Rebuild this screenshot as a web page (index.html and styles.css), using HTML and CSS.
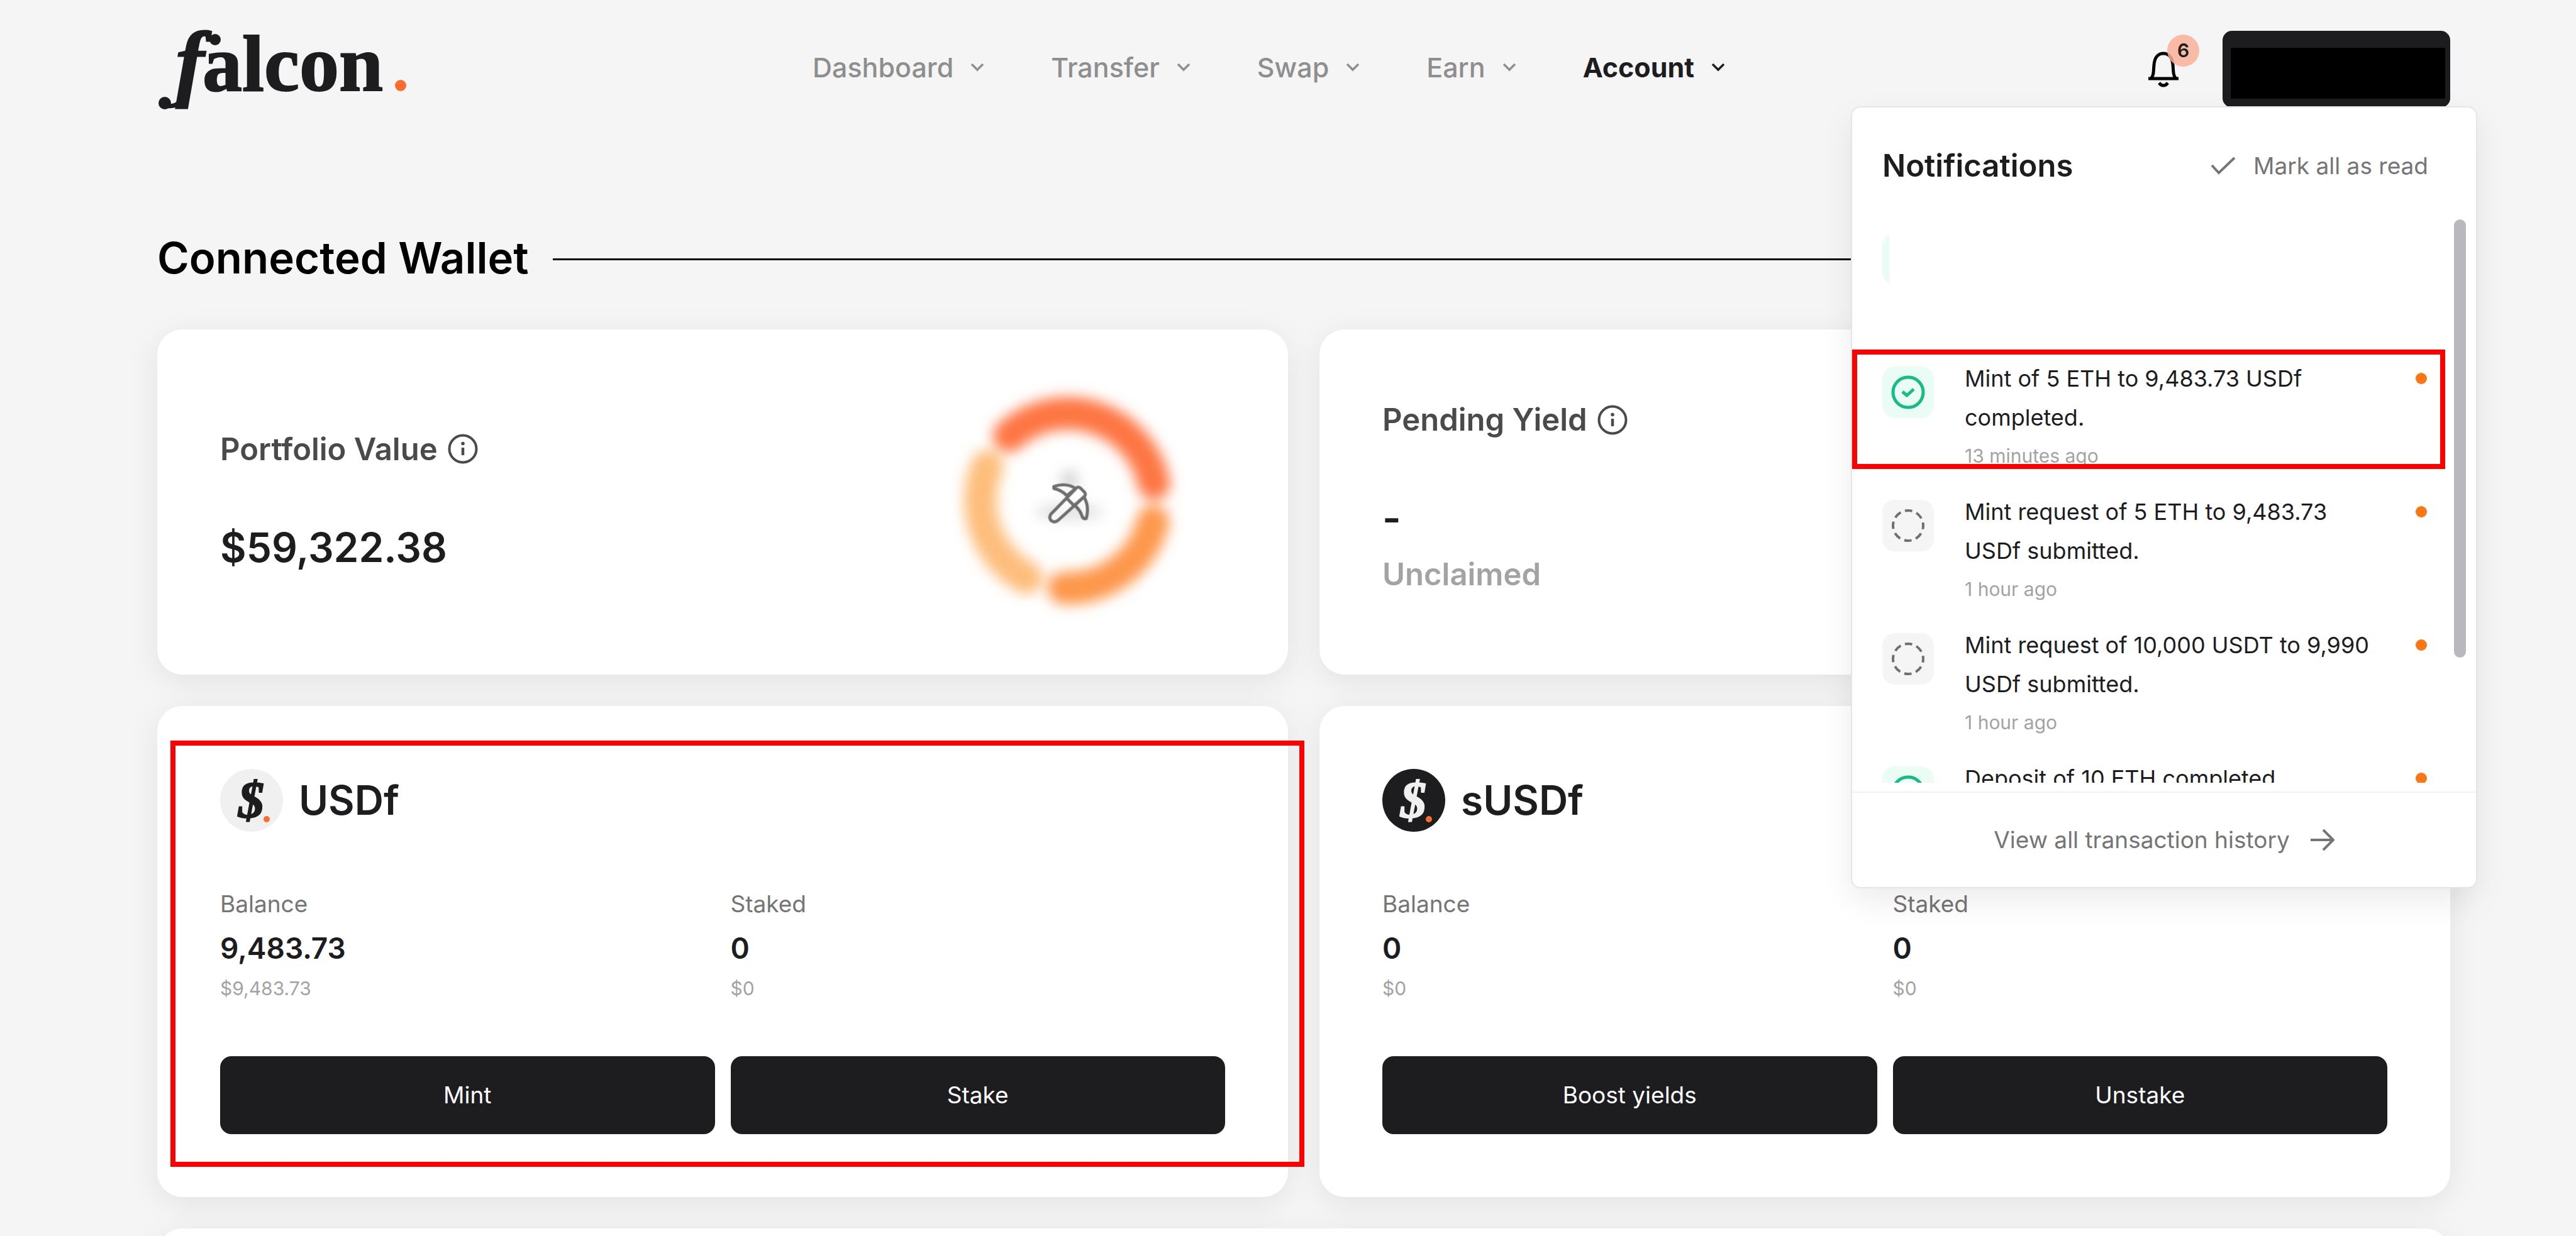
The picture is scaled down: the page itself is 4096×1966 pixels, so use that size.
FILE: index.html
```html
<!DOCTYPE html>
<html lang="en">
<head>
<meta charset="utf-8">
<title>Falcon</title>
<link rel="stylesheet" href="styles.css">
</head>
<body>
<svg class="sprite" aria-hidden="true">
  <symbol id="chevron" viewBox="0 0 24 24"><path d="M3 7l9 9 9-9" fill="none" stroke="currentColor" stroke-width="3.500"/></symbol>
  <symbol id="info" viewBox="0 0 48 48"><circle cx="24" cy="24" r="21.5" fill="none" stroke="currentColor" stroke-width="4"/><path d="M24 22v12" stroke="currentColor" stroke-width="4.5"/><circle cx="24" cy="15.500" r="2.800" fill="currentColor"/></symbol>
  <symbol id="done" viewBox="0 0 54 54"><circle cx="27" cy="27" r="24" fill="none" stroke="currentColor" stroke-width="5"/><path d="M18 26l7 6 11-10" fill="none" stroke="currentColor" stroke-width="5"/></symbol>
  <symbol id="pending" viewBox="0 0 54 54"><circle cx="27" cy="27" r="24" fill="none" stroke="currentColor" stroke-width="4" stroke-dasharray="11.850 7" stroke-dashoffset="5.900"/></symbol>
</svg>
<div class="page">
  <header class="header">
    <a class="logo" href="#" aria-label="falcon">
      <svg width="398" height="130" viewBox="0 0 398 130">
        <text class="logo-f" x="30" y="95">f</text>
        <path d="M47 96Q36 124 13 119" fill="none" stroke="#1d1d1f" stroke-width="7"/>
        <circle cx="12" cy="115" r="10" fill="#1d1d1f"/>
        <circle cx="92" cy="14" r="9" fill="#1d1d1f"/>
        <text class="logo-rest" x="72" y="95">alcon</text>
        <circle cx="387" cy="87" r="9" fill="#fd6c2d"/>
      </svg>
    </a>
    <nav class="nav">
      <a href="#">Dashboard<svg><use href="#chevron"/></svg></a>
      <a href="#">Transfer<svg><use href="#chevron"/></svg></a>
      <a href="#">Swap<svg><use href="#chevron"/></svg></a>
      <a href="#">Earn<svg><use href="#chevron"/></svg></a>
      <a href="#" class="active">Account<svg><use href="#chevron"/></svg></a>
    </nav>
    <div class="actions">
      <button class="bell" aria-label="Notifications">
        <svg width="60" height="60" viewBox="0 0 60 60"><path d="M6 45h48M10 45c5-5 4-12 5-22C16 11 22 5 30 5s14 6 15 18c1 10 0 17 5 22" fill="none" stroke="#000" stroke-width="5"/><path d="M23 52q7 8 14 0" fill="none" stroke="#000" stroke-width="5"/></svg>
        <span class="badge">6</span>
      </button>
      <button class="wallet" aria-label="Wallet"><span></span></button>
    </div>
    <section class="panel">
      <div class="panel-head">
        <h2>Notifications</h2>
        <button class="mark"><svg width="40" height="30" viewBox="0 0 40 30"><path d="M2 14l11 12L38 2" fill="none" stroke="currentColor" stroke-width="4"/></svg>Mark all as read</button>
      </div>
      <div class="panel-body">
        <ul class="list">
          <li class="redacted"><span class="sliver"><span class="state ok"></span></span></li>
          <li class="marked"><span class="state ok"><svg><use href="#done"/></svg></span><div><p>Mint of 5 ETH to 9,483.73 USDf completed.</p><time>13 minutes ago</time></div><i class="dot"></i></li>
          <li><span class="state"><svg><use href="#pending"/></svg></span><div><p>Mint request of 5 ETH to 9,483.73 USDf submitted.</p><time>1 hour ago</time></div><i class="dot"></i></li>
          <li><span class="state"><svg><use href="#pending"/></svg></span><div><p>Mint request of 10,000 USDT to 9,990 USDf submitted.</p><time>1 hour ago</time></div><i class="dot"></i></li>
          <li><span class="state ok"><svg><use href="#done"/></svg></span><div><p>Deposit of 10 ETH completed.</p></div><i class="dot"></i></li>
        </ul>
        <div class="thumb"></div>
      </div>
      <a class="panel-foot" href="#">View all transaction history<svg width="38" height="36" viewBox="0 0 38 36"><path d="M0 18h36M20 2l16 16-16 16" fill="none" stroke="currentColor" stroke-width="4"/></svg></a>
    </section>
  </header>
  <main>
    <h1 class="title">Connected Wallet</h1>
    <div class="cards">
      <section class="card summary">
        <div>
          <h3>Portfolio Value <svg><use href="#info"/></svg></h3>
          <p class="amount">$59,322.38</p>
        </div>
        <svg class="donut" width="440" height="440" viewBox="-671 -671 1342 1342">
          <defs><filter id="soft" x="-30%" y="-30%" width="160%" height="160%"><feGaussianBlur stdDeviation="33"/></filter></defs>
          <g filter="url(#soft)" fill="none" stroke-width="158" stroke-linecap="round">
            <path d="M-285-313A425 425 0 0 1 417-82" stroke="#fd7643"/>
            <path d="M413 102A425 425 0 0 1-20 425" stroke="#fd974c"/>
            <path d="M-201 375A425 425 0 0 1-391-165" stroke="#fdbe7c"/>
          </g>
          <g filter="url(#soft)" fill="#000"><circle cx="8" cy="-100" r="42" opacity=".2"/><ellipse cx="5" cy="55" rx="165" ry="38" opacity=".12"/></g>
          <g transform="translate(-683 -638)" fill="#fff" fill-opacity=".6" stroke="#6e6e6e" stroke-width="15" stroke-linejoin="round">
            <path d="M615 570q60-20 105 10l-42 35q-25-27-63-35z"/>
            <path d="M760 620q28 45 12 105q-14 5-20-10q-10-32-38-55z"/>
            <path d="M600 705L722 580q8-12 22-2l20 20q8 12-2 22L636 734q-20 16-36 0q-10-14 0-29z"/>
            <path d="M678 628l32 32" fill="none"/>
          </g>
        </svg>
      </section>
      <section class="card summary">
        <div>
          <h3>Pending Yield <svg><use href="#info"/></svg></h3>
          <p class="amount">-</p>
          <p class="note">Unclaimed</p>
        </div>
      </section>
      <section class="card token outlined">
        <h2><svg width="100" height="100" viewBox="0 0 100 100"><circle cx="50" cy="50" r="50" fill="#f0f0f0"/><text class="coin" x="29" y="77" fill="#1d1d1f" stroke="#1d1d1f">$</text><circle cx="74" cy="80" r="5" fill="#fd6c2d"/></svg>USDf</h2>
        <dl>
          <div><dt>Balance</dt><dd>9,483.73</dd><dd class="sub">$9,483.73</dd></div>
          <div><dt>Staked</dt><dd>0</dd><dd class="sub">$0</dd></div>
        </dl>
        <div class="buttons"><button>Mint</button><button>Stake</button></div>
      </section>
      <section class="card token">
        <h2><svg width="100" height="100" viewBox="0 0 100 100"><circle cx="50" cy="50" r="50" fill="#1d1d1f"/><text class="coin" x="29" y="77" fill="#f0f0f0" stroke="#f0f0f0">$</text><circle cx="74" cy="80" r="5" fill="#fd6c2d"/></svg>sUSDf</h2>
        <dl>
          <div><dt>Balance</dt><dd>0</dd><dd class="sub">$0</dd></div>
          <div><dt>Staked</dt><dd>0</dd><dd class="sub">$0</dd></div>
        </dl>
        <div class="buttons"><button>Boost yields</button><button>Unstake</button></div>
      </section>
      <section class="card wide"></section>
    </div>
  </main>
</div>
</body>
</html>
```
FILE: styles.css
```css
*, *::after { box-sizing: border-box; margin: 0; padding: 0; }
body {
  height: 100vh;
  overflow: hidden;
  background: #f5f5f5;
  color: #1d1d1f;
  font: 400 40px/60px Inter, "Open Sans", sans-serif;
}
button { border: 0; background: none; font: inherit; color: inherit; }
a { color: inherit; text-decoration: none; }
svg { flex: none; display: block; }
.sprite { position: absolute; width: 0; height: 0; }
.page { padding: 0 200px 0 250px; }

.header { position: relative; display: flex; align-items: flex-start; justify-content: space-between; height: 360px; padding-top: 49px; }
.logo { display: block; height: 130px; }
.logo svg { overflow: visible; }
.logo text { font-family: "Liberation Serif", serif; font-weight: 700; fill: #1d1d1f; stroke: #1d1d1f; stroke-width: 2px; }
.logo .logo-f { font-size: 134px; font-style: italic; stroke-width: 3px; }
.logo .logo-rest { font-size: 126px; }
.nav { display: flex; gap: 105px; height: 116px; align-items: center; margin-right: 22px; font-size: 43px; font-weight: 500; color: #8e8e8e; }
.nav a { display: flex; align-items: center; gap: 26px; }
.nav svg { width: 24px; height: 24px; }
.nav .active { color: #1d1d1f; font-weight: 700; }
.actions { display: flex; align-items: center; gap: 64px; }
.bell { position: relative; width: 60px; height: 60px; }
.badge { position: absolute; left: 36px; top: -25px; width: 51px; height: 51px; border-radius: 50%; background: rgba(249, 176, 150, .85); font-size: 30px; line-height: 51px; font-weight: 600; text-align: center; }
.wallet { width: 362px; height: 122px; border-radius: 15px; background: #1d1d1f; padding: 27px 8px 14px 13px; }
.wallet span { display: block; height: 81px; background: #000; }

.panel { position: absolute; z-index: 2; top: 169px; right: -43px; width: 996px; background: #fff; border: 2px solid #e5e5e5; border-radius: 15px; box-shadow: 0 20px 50px rgba(0, 0, 0, .08); }
.panel-head { display: flex; align-items: center; justify-content: space-between; height: 178px; padding: 8px 76px 0 48px; }
.panel-head h2 { font-size: 49px; font-weight: 600; }
.mark { display: flex; align-items: center; gap: 28px; font-size: 37px; color: #757575; }
.panel-body { display: flex; gap: 43px; height: 912px; padding: 0 16px 14px 48px; border-bottom: 2px solid #f2f2f2; }
.list { flex: 1; list-style: none; overflow: hidden; margin: 0 -29px 0 -48px; padding: 10px 29px 0 48px; }
.list li { position: relative; display: flex; height: 212px; font-size: 36px; line-height: 62px; }
.list div { flex: 1; margin: 0 56px 0 49px; }
.list time { display: block; margin-top: 10px; font-size: 30px; line-height: 40px; color: #a3a3a3; }
.state { display: flex; align-items: center; justify-content: center; flex: none; width: 82px; height: 82px; margin-top: 12px; border-radius: 20px; background: #f5f5f5; color: #707070; }
.state svg { width: 54px; height: 54px; }
.state.ok { background: #eafdf5; color: #16bb85; }
.sliver { width: 11px; overflow: hidden; }
.dot { flex: none; width: 18px; height: 18px; margin-top: 22px; border-radius: 50%; background: #fc7614; }
.marked::after { content: ""; position: absolute; left: -48px; top: -15px; right: -29px; height: 190px; border: 8px solid #f00; }
.thumb { flex: none; width: 19px; height: 697px; border-radius: 10px; background: #b9b8be; }
.panel-foot { display: flex; align-items: center; justify-content: center; gap: 33px; height: 150px; font-size: 37px; color: #757575; }

.title { display: flex; align-items: center; gap: 38px; height: 100px; font-size: 69px; font-weight: 600; color: #000; white-space: nowrap; }
.title::after { content: ""; flex: 1; height: 3px; margin-top: 4px; background: #000; }
.cards { display: grid; grid-template-columns: 1fr 1fr; gap: 50px; margin-top: 64px; }
.card { position: relative; background: #fff; border-radius: 40px; padding: 100px; box-shadow: 0 10px 50px rgba(0, 0, 0, .08); }
.summary { display: flex; align-items: center; justify-content: space-between; height: 549px; padding-right: 130px; padding-bottom: 106px; }
.summary h3 { display: flex; align-items: center; gap: 16px; margin-bottom: 75px; font-size: 49px; line-height: 75px; font-weight: 600; color: #4a4a4a; }
.summary h3 svg { width: 48px; height: 48px; }
.amount { font-size: 64px; line-height: 88px; font-weight: 600; }
.note { margin: 8px 0 10px; font-size: 49px; line-height: 75px; font-weight: 600; color: #a3a3a3; }
.token h2 { display: flex; align-items: center; gap: 25px; font-size: 64px; line-height: 100px; font-weight: 600; }
.coin { font: italic 700 82px "Liberation Serif", serif; stroke-width: 2px; }
.token dl, .buttons { display: grid; grid-template-columns: 1fr 1fr; gap: 25px; }
.token dl { margin: 85px 0 84px; }
.token dt { font-size: 37px; color: #757575; }
.token dd { margin-top: 4px; font-size: 46px; line-height: 72px; font-weight: 600; }
.token .sub { font-size: 30px; line-height: 48px; font-weight: 400; color: #a3a3a3; }
.buttons button { height: 124px; border-radius: 18px; background: #1d1d1f; color: #fff; font-size: 37px; }
.outlined::after { content: ""; position: absolute; inset: 55px -26px 48px 21px; border: 8px solid #f00; }
.wide { grid-column: 1 / -1; height: 500px; }
```
